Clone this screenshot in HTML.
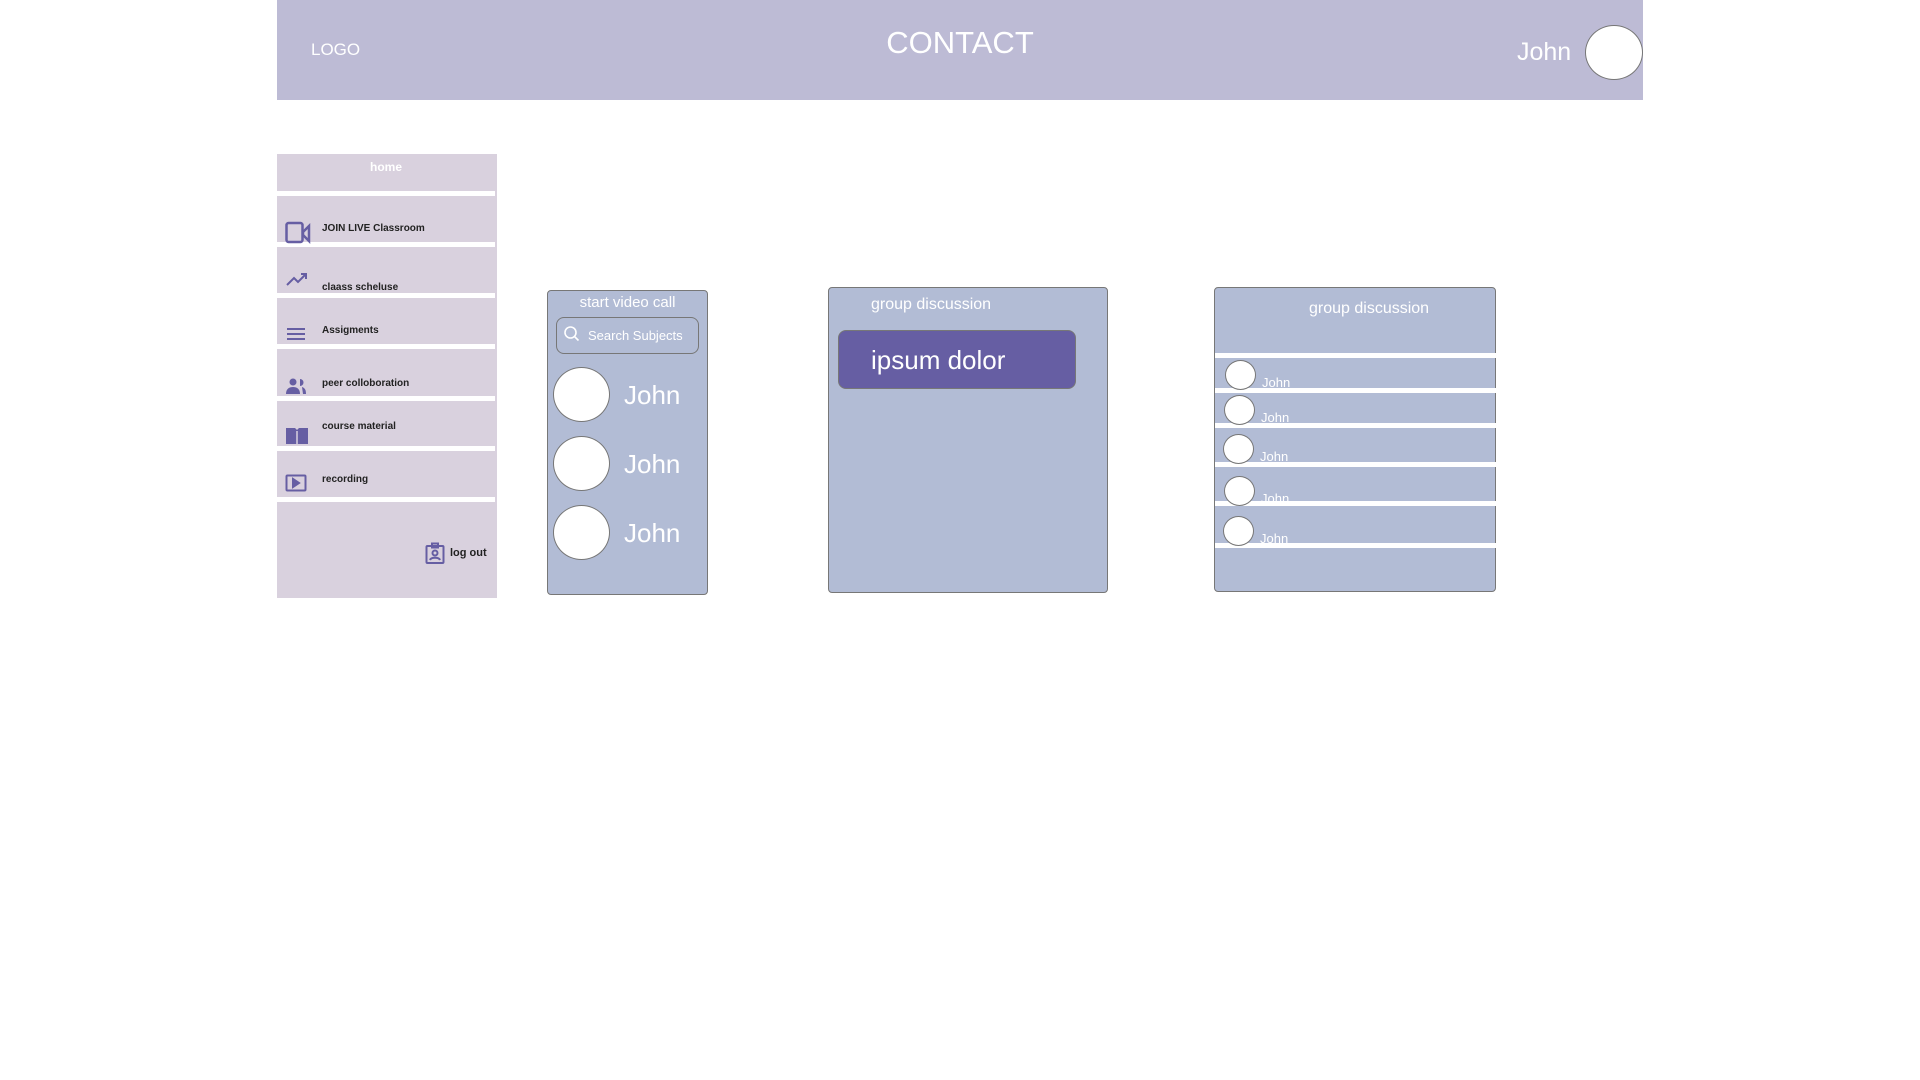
<!DOCTYPE html>
<html><head><meta charset="utf-8"><style>
*{margin:0;padding:0;box-sizing:border-box}
body{width:1920px;height:1080px;background:#fff;position:relative;overflow:hidden;font-family:"Liberation Sans",sans-serif}
.a{position:absolute}
.hdr{left:277px;top:0;width:1366px;height:100px;background:#bdbbd5}
.w{color:#fff}
.side{left:277px;top:154px;width:220px;height:444px;background:#d9d1de}
.sep{position:absolute;left:0;width:218px;height:5px;background:#fff}
.it{position:absolute;left:45px;font-size:10px;font-weight:bold;color:#222}
.ic{position:absolute;left:8px}
.panel{background:#b2bcd5;border:1px solid #777;border-radius:4px}
.circ{position:absolute;background:#fff;border:1px solid #777;border-radius:50%}
.line{position:absolute;left:0;width:281px;height:5px;background:#fff}
.jn{position:absolute;font-size:13px;color:#fff}
</style></head><body>
<div class="a hdr">
  <div class="a w" style="left:34px;top:40px;font-size:17px">LOGO</div>
  <div class="a w" style="left:0;width:1366px;text-align:center;top:25px;font-size:31px">CONTACT</div>
  <div class="a w" style="left:1240px;top:38px;font-size:25px">John</div>
  <div class="circ" style="left:1308px;top:25px;width:58px;height:55px"></div>
</div>
<div class="a side">
  <div class="a w" style="left:0;width:218px;text-align:center;top:6px;font-size:12px;font-weight:bold">home</div>
  <div class="sep" style="top:37px"></div>
  <div class="sep" style="top:88px"></div>
  <div class="sep" style="top:139px"></div>
  <div class="sep" style="top:190px"></div>
  <div class="sep" style="top:242px"></div>
  <div class="sep" style="top:292px"></div>
  <div class="sep" style="top:343px"></div>
  <svg class="ic" style="top:66px" width="26" height="26" viewBox="0 0 26 26" fill="none" stroke="#665ea3" stroke-width="2.5"><rect x="1.5" y="3" width="16" height="19" rx="2"/><path d="M18 12l6-6v15l-6-6z"/></svg>
  <div class="it" style="top:69px">JOIN LIVE Classroom</div>
  <svg class="ic" style="top:118px" width="24" height="16" viewBox="0 0 24 16" fill="none" stroke="#665ea3" stroke-width="2"><path d="M2 13l7-7 4 4 8-8M16 2h5v5"/></svg>
  <div class="it" style="top:128px">claass scheluse</div>
  <svg class="ic" style="top:173px" width="22" height="14" viewBox="0 0 22 14" stroke="#665ea3" stroke-width="2"><path d="M2 2h18M2 7h18M2 12h18"/></svg>
  <div class="it" style="top:171px">Assigments</div>
  <svg class="ic" style="top:224px" width="22" height="16" viewBox="0 0 22 16" fill="#665ea3"><circle cx="8" cy="4" r="3.5"/><path d="M1 16c0-5 3-7 7-7s7 2 7 7z"/><path d="M15 1a3.5 3.5 0 010 7zM17 9c3 1 4 3 4 7h-3z"/></svg>
  <div class="it" style="top:224px">peer colloboration</div>
  <svg class="ic" style="top:272px" width="24" height="18" viewBox="0 0 24 18" fill="#665ea3"><path d="M1 2h9l2 2 2-2h9v16H1z"/><path d="M12 5v13" stroke="#d9d1de" stroke-width="1.5"/></svg>
  <div class="it" style="top:267px">course material</div>
  <svg class="ic" style="top:320px" width="22" height="18" viewBox="0 0 22 18" fill="none" stroke="#665ea3" stroke-width="2"><rect x="1.5" y="1.5" width="19" height="15" rx="1"/><path d="M8 5l6 4-6 4z" fill="#665ea3"/></svg>
  <div class="it" style="top:320px">recording</div>
  <svg class="a" style="left:148px;top:388px" width="20" height="22" viewBox="0 0 20 22" fill="none" stroke="#665ea3" stroke-width="2"><rect x="1.5" y="4" width="17" height="17" rx="1"/><path d="M7 1.5h6v4H7z"/><circle cx="10" cy="11" r="2.5"/><path d="M5 18c1-3 9-3 10 0"/></svg>
  <div class="a" style="left:173px;top:393px;font-size:11px;font-weight:bold;color:#222">log out</div>
</div>

<div class="a panel" style="left:547px;top:290px;width:161px;height:305px">
  <div class="a w" style="left:0;width:159px;text-align:center;top:3px;font-size:15px">start video call</div>
  <div class="a" style="left:8px;top:26px;width:143px;height:37px;border:1px solid #777;border-radius:8px"></div>
  <svg class="a" style="left:15px;top:34px" width="18" height="18" viewBox="0 0 18 18" fill="none" stroke="#fff" stroke-width="1.6"><circle cx="7.5" cy="7.5" r="5.5"/><path d="M11.5 11.5l4 4"/></svg>
  <div class="a w" style="left:40px;top:37px;font-size:13px">Search Subjects</div>
  <div class="circ" style="left:5px;top:76px;width:57px;height:55px"></div>
  <div class="circ" style="left:5px;top:145px;width:57px;height:55px"></div>
  <div class="circ" style="left:5px;top:214px;width:57px;height:55px"></div>
  <div class="a w" style="left:76px;top:89px;font-size:26px">John</div>
  <div class="a w" style="left:76px;top:158px;font-size:26px">John</div>
  <div class="a w" style="left:76px;top:227px;font-size:26px">John</div>
</div>

<div class="a panel" style="left:828px;top:287px;width:280px;height:306px">
  <div class="a w" style="left:42px;top:8px;font-size:16px">group discussion</div>
  <div class="a" style="left:9px;top:42px;width:238px;height:59px;background:#665ea3;border:1px solid #777;border-radius:8px"></div>
  <div class="a w" style="left:42px;top:57px;font-size:26px">ipsum dolor</div>
</div>

<div class="a panel" style="left:1214px;top:287px;width:282px;height:305px">
  <div class="a w" style="left:94px;top:12px;font-size:16px">group discussion</div>
  <div class="line" style="top:65px"></div>
  <div class="line" style="top:100px"></div>
  <div class="line" style="top:135px"></div>
  <div class="line" style="top:174px"></div>
  <div class="line" style="top:213px"></div>
  <div class="line" style="top:255px"></div>
  <div class="circ" style="left:10px;top:72px;width:31px;height:30px"></div>
  <div class="circ" style="left:9px;top:107px;width:31px;height:30px"></div>
  <div class="circ" style="left:8px;top:146px;width:31px;height:30px"></div>
  <div class="circ" style="left:9px;top:188px;width:31px;height:30px"></div>
  <div class="circ" style="left:8px;top:228px;width:31px;height:30px"></div>
  <div class="jn" style="left:47px;top:87px">John</div>
  <div class="jn" style="left:46px;top:122px">John</div>
  <div class="jn" style="left:45px;top:161px">John</div>
  <div class="jn" style="left:46px;top:203px">John</div>
  <div class="jn" style="left:45px;top:243px">John</div>
</div>
</body></html>
